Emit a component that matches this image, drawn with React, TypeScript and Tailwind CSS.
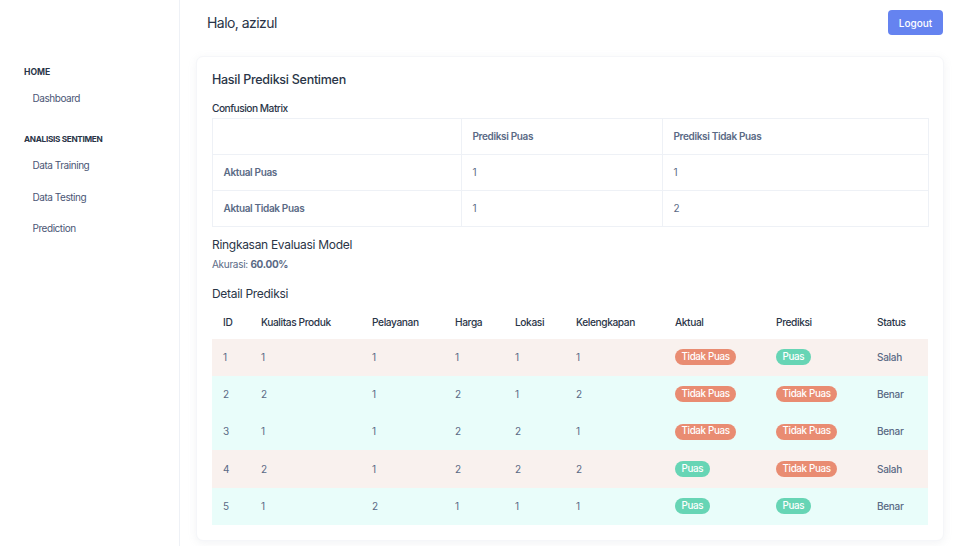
const font = { fontFamily: '"Inter", "Noto Sans", sans-serif' };

const rows = [
  { id: 1, kualitas: 1, pelayanan: 1, harga: 1, lokasi: 1, lengkap: 1, aktual: 'Tidak Puas', prediksi: 'Puas', status: 'Salah' },
  { id: 2, kualitas: 2, pelayanan: 1, harga: 2, lokasi: 1, lengkap: 2, aktual: 'Tidak Puas', prediksi: 'Tidak Puas', status: 'Benar' },
  { id: 3, kualitas: 1, pelayanan: 1, harga: 2, lokasi: 2, lengkap: 1, aktual: 'Tidak Puas', prediksi: 'Tidak Puas', status: 'Benar' },
  { id: 4, kualitas: 2, pelayanan: 1, harga: 2, lokasi: 2, lengkap: 2, aktual: 'Puas', prediksi: 'Tidak Puas', status: 'Salah' },
  { id: 5, kualitas: 1, pelayanan: 2, harga: 1, lokasi: 1, lengkap: 1, aktual: 'Puas', prediksi: 'Puas', status: 'Benar' },
];

const headers = ['ID', 'Kualitas Produk', 'Pelayanan', 'Harga', 'Lokasi', 'Kelengkapan', 'Aktual', 'Prediksi', 'Status'];
const detailWidths = ['w-[38px]', 'w-[111px]', 'w-[83px]', 'w-[60px]', 'w-[61px]', 'w-[99px]', 'w-[101px]', 'w-[101px]', 'w-[62px]'];

function Badge({ label }: { label: string }) {
  return (
    <span className={`flex h-4 w-fit items-center rounded-full px-[6.5px] text-[9.8px] font-medium tracking-[-0.35px] text-white ${label === 'Puas' ? 'bg-[#67d5b5]' : 'bg-[#e98c72]'}`}>
      {label}
    </span>
  );
}

function NavItem({ label }: { label: string }) {
  return <a className="block h-[31.3px] pl-[32.5px] text-[10px] leading-[31px] tracking-[-0.45px] text-[#4b5675]">{label}</a>;
}

function MatrixCell({ children, head }: { children?: React.ReactNode; head?: boolean }) {
  return (
    <td className={`h-9 border border-[#eef1f6] px-[10.5px] text-[10px] tracking-[-0.35px] text-[#5a6a85] ${head ? 'font-semibold' : ''}`}>
      {children}
    </td>
  );
}

export default function App() {
  return (
    <div className="flex h-[546px] w-[960px] overflow-hidden bg-white text-[#2a3547]" style={font}>
      {/* Sidebar */}
      <aside className="w-[180px] shrink-0 border-r border-[#eef1f6] pt-[67px]">
        <div className="pl-6 text-[8.6px] font-bold leading-[11px] text-[#2a3547]">HOME</div>
        <div className="mt-[5px]">
          <NavItem label="Dashboard" />
        </div>
        <div className="mt-5 pl-6 text-[8.2px] font-bold leading-[11px] tracking-[-0.3px] text-[#2a3547]">ANALISIS SENTIMEN</div>
        <div className="mt-[5px]">
          <NavItem label="Data Training" />
          <NavItem label="Data Testing" />
          <NavItem label="Prediction" />
        </div>
      </aside>

      <main className="min-w-0 flex-1">
        {/* Header */}
        <header className="flex h-[46px] items-start justify-between pl-[27px] pr-[17px] pt-[10px]">
          <h1 className="text-[14px] font-normal leading-[26px] tracking-[-0.55px] text-[#2a3547]">Halo, azizul</h1>
          <button className="h-[25px] w-[55px] rounded-[4px] bg-[#6583f0] pt-px text-[10px] font-medium text-white">Logout</button>
        </header>

        {/* Card */}
        <section className="ml-4 mt-[10px] h-[485px] w-[748px] rounded-[7px] border border-[#f5f6f9] bg-white px-[15px] pt-[14px] shadow-[0_2px_8px_rgba(145,158,171,0.12)]">
          <h2 className="text-[12.5px] font-medium leading-[18px] tracking-[-0.27px] text-[#2a3547]">Hasil Prediksi Sentimen</h2>
          <h3 className="mt-[12px] text-[10.2px] font-medium leading-[14px] tracking-[-0.5px] text-[#2a3547]">Confusion Matrix</h3>

          <table className="mt-[3px] w-[715.5px] table-fixed border-collapse">
            <colgroup>
              <col className="w-[249px]" />
              <col className="w-[201px]" />
              <col className="w-[265.5px]" />
            </colgroup>
            <tbody>
              <tr>
                <MatrixCell />
                <MatrixCell head>Prediksi Puas</MatrixCell>
                <MatrixCell head>Prediksi Tidak Puas</MatrixCell>
              </tr>
              <tr>
                <MatrixCell head>Aktual Puas</MatrixCell>
                <MatrixCell>1</MatrixCell>
                <MatrixCell>1</MatrixCell>
              </tr>
              <tr>
                <MatrixCell head>Aktual Tidak Puas</MatrixCell>
                <MatrixCell>1</MatrixCell>
                <MatrixCell>2</MatrixCell>
              </tr>
            </tbody>
          </table>

          <h3 className="mt-[9px] text-[12px] font-normal leading-[18px] tracking-[-0.3px] text-[#2a3547]">Ringkasan Evaluasi Model</h3>
          <p className="mt-px text-[10px] leading-[18px] tracking-[-0.3px] text-[#5a6a85]">
            Akurasi: <strong className="font-bold">60.00%</strong>
          </p>

          <h3 className="mt-3 text-[12px] font-normal leading-[18px] tracking-[-0.3px] text-[#2a3547]">Detail Prediksi</h3>

          <table className="mt-[3.5px] w-[716px] table-fixed border-collapse">
            <colgroup>
              {detailWidths.map((w, i) => (
                <col key={i} className={w} />
              ))}
            </colgroup>
            <thead>
              <tr>
                {headers.map((h) => (
                  <th key={h} className="h-8 px-[11px] text-left text-[10.2px] font-medium tracking-[-0.4px] text-[#2a3547]">
                    {h}
                  </th>
                ))}
              </tr>
            </thead>
            <tbody>
              {rows.map((r) => (
                <tr key={r.id} className={r.status === 'Salah' ? 'bg-[#f9f1ee]' : 'bg-[#e9fdfa]'}>
                  {[r.id, r.kualitas, r.pelayanan, r.harga, r.lokasi, r.lengkap].map((v, i) => (
                    <td key={i} className="h-[37.33px] px-[11px] text-[10px] text-[#5a6a85]">{v}</td>
                  ))}
                  <td className="px-[11px]"><Badge label={r.aktual} /></td>
                  <td className="px-[11px]"><Badge label={r.prediksi} /></td>
                  <td className="px-[11px] text-[10px] font-medium tracking-[-0.3px] text-[#5a6a85]">{r.status}</td>
                </tr>
              ))}
            </tbody>
          </table>
        </section>
      </main>
    </div>
  );
}
